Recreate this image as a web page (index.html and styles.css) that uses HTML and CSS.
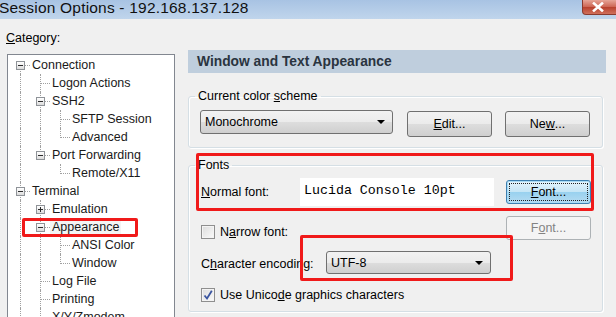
FILE: index.html
```html
<!DOCTYPE html>
<html>
<head>
<meta charset="utf-8">
<link rel="stylesheet" href="styles.css">
</head>
<body>
<div class="window">
  <div class="titlebar">
    <span class="title">Session Options - 192.168.137.128</span>
    <span class="close"><svg width="14" height="10" viewBox="0 0 14 10"><path d="M3 1.5 L11 8.5 M11 1.5 L3 8.5" stroke="#fff" stroke-width="2.6" stroke-linecap="square"/></svg></span>
  </div>
  <div class="main">
    <div class="left">
      <div class="cat-label"><u>C</u>ategory:</div>
      <div class="tree">
        <div class="node"><span class="c first"><i class="box minus"></i></span><span class="lbl">Connection</span></div>
        <div class="node"><span class="c pipe"></span><span class="c tee"></span><span class="lbl">Logon Actions</span></div>
        <div class="node"><span class="c pipe"></span><span class="c tee"><i class="box minus"></i></span><span class="lbl">SSH2</span></div>
        <div class="node"><span class="c pipe"></span><span class="c pipe"></span><span class="c tee"></span><span class="lbl">SFTP Session</span></div>
        <div class="node"><span class="c pipe"></span><span class="c pipe"></span><span class="c ell"></span><span class="lbl">Advanced</span></div>
        <div class="node"><span class="c pipe"></span><span class="c ell"><i class="box minus"></i></span><span class="lbl">Port Forwarding</span></div>
        <div class="node"><span class="c pipe"></span><span class="c"></span><span class="c ell"></span><span class="lbl">Remote/X11</span></div>
        <div class="node"><span class="c tee"><i class="box minus"></i></span><span class="lbl">Terminal</span></div>
        <div class="node"><span class="c pipe"></span><span class="c tee"><i class="box plus"></i></span><span class="lbl">Emulation</span></div>
        <div class="node"><span class="c pipe"></span><span class="c tee"><i class="box minus"></i></span><span class="lbl sel">Appearance</span></div>
        <div class="node"><span class="c pipe"></span><span class="c pipe"></span><span class="c tee"></span><span class="lbl">ANSI Color</span></div>
        <div class="node"><span class="c pipe"></span><span class="c pipe"></span><span class="c ell"></span><span class="lbl">Window</span></div>
        <div class="node"><span class="c pipe"></span><span class="c tee"></span><span class="lbl">Log File</span></div>
        <div class="node"><span class="c pipe"></span><span class="c tee"></span><span class="lbl">Printing</span></div>
        <div class="node"><span class="c pipe"></span><span class="c tee"></span><span class="lbl">X/Y/Zmodem</span></div>
      </div>
    </div>
    <div class="right">
      <div class="band">Window and Text Appearance</div>
      <fieldset class="group g1">
        <legend>Current color <u>s</u>cheme</legend>
        <div class="row scheme-row">
          <div class="combo scheme-combo"><span>Monochrome</span><i class="arrow"></i></div>
          <button class="btn edit-btn"><u>E</u>dit...</button>
          <button class="btn new-btn">Ne<u>w</u>...</button>
        </div>
      </fieldset>
      <fieldset class="group g2">
        <legend>Fonts</legend>
        <div class="row r1">
          <span class="flabel"><u>N</u>ormal font:</span>
          <div class="fontfield">Lucida Console 10pt</div>
          <button class="btn focus-btn"><span class="focusring"><u>F</u>ont...</span></button>
        </div>
        <div class="row r2">
          <span class="chk"></span>
          <span class="clabel">N<u>a</u>rrow font:</span>
          <button class="btn disabled-btn">F<u>o</u>nt...</button>
        </div>
        <div class="row r3">
          <span class="flabel enc-label">C<u>h</u>aracter encoding:</span>
          <div class="combo enc-combo"><span>UTF-8</span><i class="arrow"></i></div>
        </div>
        <div class="row r4">
          <span class="chk checked"><svg width="12" height="12" viewBox="0 0 12 12"><path d="M2.5 6.5 L5 9.5 L9.8 1.8" fill="none" stroke="#3b55a0" stroke-width="1.8"/></svg></span>
          <span class="clabel">Use Unico<u>d</u>e graphics characters</span>
        </div>
      </fieldset>
    </div>
  </div>
  <div class="mark mark-fonts"></div>
  <div class="mark mark-enc"></div>
  <div class="mark mark-tree"></div>
</div>
</body>
</html>
```

FILE: styles.css
```css
* { box-sizing: border-box; }
html, body { margin: 0; padding: 0; background: #f0f0f0; }
body { font-family: "Liberation Sans", Arial, sans-serif; font-size: 12.5px; color: #000; }
u { text-decoration: underline; text-underline-offset: 1px; }

.window {
  position: relative;
  width: 616px;
  height: 317px;
  overflow: hidden;
  background: #f0f0f0;
  display: flex;
  flex-direction: column;
}

.titlebar {
  height: 19px;
  flex: none;
  display: flex;
  justify-content: space-between;
  align-items: flex-start;
  background: linear-gradient(#a8c3e3, #c0d5ec);
}
.title {
  font-size: 15.5px;
  letter-spacing: 0.2px;
  line-height: 15px;
  padding-top: 0;
  color: #101010;
  margin-left: -1px;
}
.close {
  width: 36px;
  height: 15px;
  margin-right: -2px;
  border: 1px solid #8a3a2e;
  border-top: none;
  border-bottom-left-radius: 4px;
  background: linear-gradient(#e6a597, #cd6452 50%, #b8402c 51%, #d0705c);
  display: flex;
  align-items: center;
  justify-content: center;
  padding-right: 4px;
}

.main { flex: 1; display: flex; min-height: 0; }

.left { width: 175px; flex: none; display: flex; flex-direction: column; }
.cat-label { margin: 12px 0 0 6px; line-height: 15px; height: 15px; }
.tree {
  margin: 8px 0 0 7px;
  width: 168px;
  flex: 1;
  background: #fff;
  border: 1px solid #828790;
  border-bottom: none;
  padding: 1px 0 0 2px;
}
.node { height: 18px; display: flex; align-items: center; color: #1a1a1a; white-space: nowrap; }
.lbl { padding-left: 2px; line-height: 16px; }
.lbl.sel { background: #f4f4f4; padding-right: 2px; }

.c { position: relative; width: 20px; height: 18px; flex: none; }
.c::before, .c::after { content: ""; position: absolute; }
.pipe::before, .tee::before { left: 10px; top: 0; bottom: 0; border-left: 1px dotted #a0a0a0; }
.ell::before { left: 10px; top: 0; height: 10px; border-left: 1px dotted #a0a0a0; }
.first::before { left: 10px; top: 9px; bottom: 0; border-left: 1px dotted #a0a0a0; }
.tee::after, .ell::after, .first::after { left: 11px; width: 9px; top: 9px; border-top: 1px dotted #a0a0a0; }

.box {
  position: absolute;
  left: 6px; top: 5px;
  width: 9px; height: 9px;
  border: 1px solid #8f9398;
  background: linear-gradient(#ffffff, #dcdcdc);
  z-index: 1;
}
.box::before { content: ""; position: absolute; left: 1px; top: 3px; width: 5px; height: 1px; background: #2c2c2c; }
.box.plus::after { content: ""; position: absolute; left: 3px; top: 1px; width: 1px; height: 5px; background: #2c2c2c; }

.right { width: 418px; margin-left: 13px; flex: none; display: flex; flex-direction: column; }
.band {
  margin-top: 31px;
  height: 23px;
  background: #bfcedd;
  font-weight: bold;
  font-size: 13.8px;
  color: #2a3440;
  line-height: 23px;
  padding-left: 9px;
}

.group {
  margin: 0 3px 0 0;
  border: 1px solid #d5dfe5;
  border-radius: 3px;
  box-shadow: inset 1px 1px 0 #fff, 1px 1px 0 #fff;
  padding: 0 11px;
  min-width: 0;
}
.group legend { margin-left: -5px; padding: 0 3px; line-height: 14px; height: 14px; }
.g1 { margin-top: 16px; padding-top: 7px; padding-bottom: 10px; }
.g2 { margin-top: 10px; padding-top: 6px; padding-bottom: 9px; }

.row { display: flex; align-items: flex-start; }

.combo {
  display: flex;
  align-items: center;
  border: 1px solid #707070;
  border-radius: 3px;
  background: linear-gradient(#f2f2f2 0%, #ebebeb 50%, #dddddd 51%, #cfcfcf 100%);
  padding: 0 7px 0 4px;
}
.combo span { flex: 1; }
.arrow { width: 0; height: 0; border-left: 4px solid transparent; border-right: 4px solid transparent; border-top: 4px solid #000; }
.scheme-combo { width: 193px; height: 24px; }

.btn {
  font: inherit;
  color: #000;
  width: 85px;
  border: 1px solid #707070;
  border-radius: 3px;
  background: linear-gradient(#f2f2f2 0%, #ebebeb 50%, #dddddd 51%, #cfcfcf 100%);
  padding: 0;
  display: flex;
  align-items: center;
  justify-content: center;
}
.edit-btn { height: 26px; margin: 1px 0 0 14px; }
.new-btn { height: 26px; margin: 1px 0 0 13px; }

.r1 { height: 28px; align-items: center; }
.flabel { width: 100px; flex: none; padding-left: 1px; }
.fontfield {
  width: 194px;
  height: 28px;
  background: #fff;
  font-family: "Liberation Mono", "Courier New", monospace;
  font-size: 13.3px;
  line-height: 26px;
  padding-left: 4px;
  white-space: nowrap;
}
.focus-btn {
  height: 24px;
  margin-left: 12px;
  border-color: #3c7fb1;
  background: linear-gradient(#e5f4fc 0%, #c4e5f6 50%, #98d1ef 51%, #b6dcf2 100%);
  box-shadow: inset 0 0 0 1px #aadcf5;
  padding: 2px;
}
.focusring { flex: 1; align-self: stretch; display: flex; align-items: center; justify-content: center; border: 1px dotted #222; }

.r2 { margin-top: 10px; height: 24px; }
.chk {
  width: 14px; height: 14px; flex: none;
  margin-left: 1px;
  border: 1px solid #8f8f8f;
  background: linear-gradient(135deg, #dcdcdc, #fbfbfb);
  box-shadow: inset 0 0 0 1px #f4f4f4;
  display: flex; align-items: center; justify-content: center;
}
.r2 .chk { margin-top: 9px; }
.clabel { margin-left: 5px; line-height: 14px; }
.r2 .clabel { margin-top: 9px; }
.disabled-btn {
  height: 24px;
  margin-left: auto;
  border-color: #adb2b5;
  background: #f4f4f4;
  color: #838383;
}

.r3 { margin-top: 11px; height: 23px; align-items: center; }
.enc-label { width: 126px; padding-top: 2px; }
.enc-combo { width: 165px; height: 23px; }

.r4 { margin-top: 14px; height: 14px; align-items: center; }

.mark { position: absolute; border: 3px solid #f01a1a; border-radius: 2px; }
.mark-fonts { left: 196px; top: 153px; width: 398px; height: 58px; }
.mark-enc { left: 300px; top: 235px; width: 213px; height: 46px; }
.mark-tree { left: 22px; top: 218px; width: 116px; height: 19px; }
```
